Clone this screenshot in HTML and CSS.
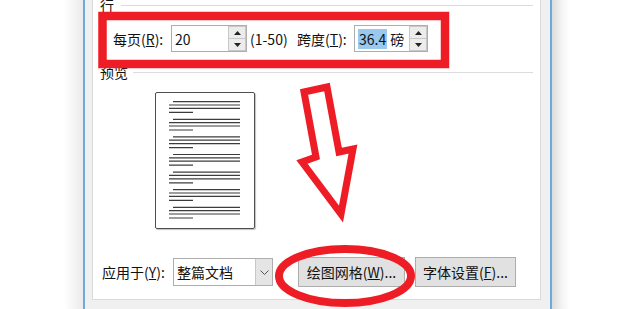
FILE: index.html
```html
<!DOCTYPE html>
<html lang="zh-CN">
<head>
<meta charset="utf-8">
<link rel="stylesheet" href="styles.css">
</head>
<body>
<div class="screen">
  <div class="shadow-left"></div>
  <div class="window">
    <div class="panel">
      <div class="group-head first"><span class="head-text">行</span><i class="rule"></i></div>
      <div class="row lines-row">
        <span class="label l1">每页(<u>R</u>):</span>
        <div class="spin s1">
          <span class="val">20</span>
          <div class="btns"><b class="sb"><svg width="7" height="4" viewBox="0 0 7 4"><path d="M0 4 L3.5 0 L7 4Z" fill="#222"/></svg></b><b class="sb"><svg width="7" height="4" viewBox="0 0 7 4"><path d="M0 0 L3.5 4 L7 0Z" fill="#222"/></svg></b></div>
        </div>
        <span class="range">(1-50)</span>
        <span class="label l2">跨度(<u>T</u>):</span>
        <div class="spin s2">
          <span class="val"><span class="sel">36.4</span> 磅</span>
          <div class="btns"><b class="sb"><svg width="7" height="4" viewBox="0 0 7 4"><path d="M0 4 L3.5 0 L7 4Z" fill="#222"/></svg></b><b class="sb"><svg width="7" height="4" viewBox="0 0 7 4"><path d="M0 0 L3.5 4 L7 0Z" fill="#222"/></svg></b></div>
        </div>
      </div>
      <div class="group-head second"><span class="head-text">预览</span><i class="rule"></i></div>
      <div class="preview">
        <div class="page">
          <svg width="100" height="137" viewBox="0 0 100 137">
            <g stroke="#3c3c3c" stroke-width="1.2">
              <g id="para">
                <line x1="18" y1="9.7" x2="85" y2="9.7"/>
                <line x1="14" y1="13" x2="85" y2="13"/>
                <line x1="14" y1="16.4" x2="85" y2="16.4"/>
                <line x1="14" y1="20.4" x2="38" y2="20.4"/>
              </g>
              <use href="#para" y="17.6"/>
              <use href="#para" y="35.2"/>
              <use href="#para" y="52.8"/>
              <use href="#para" y="70.4"/>
              <use href="#para" y="88"/>
              <use href="#para" y="105.6"/>
            </g>
          </svg>
        </div>
      </div>
      <div class="row bottom-row">
        <span class="label l3">应用于(<u>Y</u>):</span>
        <div class="combo">
          <span class="combo-text">整篇文档</span>
          <span class="drop"><svg width="9" height="5" viewBox="0 0 9 5"><path d="M0.5 0.5 L4.5 4.5 L8.5 0.5" fill="none" stroke="#555" stroke-width="1"/></svg></span>
        </div>
        <button class="btn b1">绘图网格(<u>W</u>)...</button>
        <button class="btn b2">字体设置(<u>F</u>)...</button>
      </div>
    </div>
  </div>
  <div class="shadow-right"></div>
</div>
<svg class="marks" width="620" height="309" viewBox="0 0 620 309">
  <g fill="none" stroke="#ee1c25">
    <rect x="102.5" y="16" width="342.5" height="48" stroke-width="8.5"/>
    <path d="M304 92 L327 87 L339 152 L353 149 L341 214 L302 162 L316 157 Z" stroke-width="7" stroke-linejoin="miter"/>
    <ellipse cx="345" cy="276" rx="66" ry="27" stroke-width="8"/>
  </g>
</svg>
</body>
</html>
```

FILE: styles.css
```css
html, body {
  margin: 0;
  padding: 0;
  background: #fff;
}
body {
  width: 620px;
  height: 309px;
  overflow: hidden;
  position: relative;
  font-family: "Noto Sans CJK SC", "Noto Sans", sans-serif;
  font-size: 14px;
  color: #111;
}
.screen {
  display: flex;
  height: 309px;
}
.shadow-left {
  width: 83px;
  background: linear-gradient(to right, #fff 0, #fff 64px, #ebebeb 83px);
}
.window {
  width: 449px;
  box-sizing: content-box;
  border-left: 2px solid #6ea9dd;
  border-right: 2px solid #6ea9dd;
  background: #f0f0f0;
  padding: 0 9px 9px 7px;
  display: flex;
  flex-direction: column;
}
.panel {
  flex: 1;
  background: #fff;
  border: 1px solid #dadada;
  border-top: 0;
  padding: 0 7px 12px 7px;
  display: flex;
  flex-direction: column;
}
.shadow-right {
  flex: 1;
  background: linear-gradient(to right, #dcdcdc 0, #f4f4f4 10px, #fff 18px);
}
.group-head {
  display: flex;
  align-items: center;
  height: 16px;
  line-height: 16px;
  gap: 7px;
}
.group-head.first { margin-top: -3px; }
.group-head.second { margin-top: 12px; gap: 5px; }
.rule {
  flex: 1;
  height: 1px;
  background: #dcdcdc;
}
.row {
  display: flex;
  align-items: center;
}
.lines-row {
  margin-top: 12px;
  height: 27px;
  padding-left: 13px;
}
.label { white-space: nowrap; }
.l1 { width: 58px; }
.l2 { width: 57px; }
.l3 { width: 71px; padding-left: 2px; }
.range { width: 47px; margin-left: 3px; }
.spin {
  box-sizing: border-box;
  height: 27px;
  border: 1px solid #adadad;
  background: #fff;
  display: flex;
  align-items: center;
  position: relative;
}
.s1 { width: 76px; }
.s2 { width: 74px; }
.val {
  flex: 1;
  padding-left: 3px;
  line-height: 18px;
}
.sel {
  background: #99c9ef;
  padding: 0 1px;
}
.btns {
  width: 18px;
  height: 25px;
  display: flex;
  flex-direction: column;
  margin-right: 0;
}
.sb {
  flex: 1;
  box-sizing: border-box;
  border: 1px solid #c8c8c8;
  background: #ececec;
  display: flex;
  align-items: center;
  justify-content: center;
}
.sb + .sb { border-top: 0; }
.preview {
  margin-top: 12px;
  padding-left: 55px;
}
.page {
  width: 100px;
  height: 137px;
  box-sizing: border-box;
  border: 1.5px solid #505050;
  border-radius: 2px;
  box-shadow: 1px 1px 1px rgba(0,0,0,0.25);
  position: relative;
  overflow: hidden;
}
.page svg {
  position: absolute;
  left: -1.5px;
  top: -1.5px;
}
.bottom-row {
  margin-top: 28px;
  height: 30px;
}
.combo {
  box-sizing: border-box;
  width: 100px;
  height: 28px;
  border: 1px solid #adadad;
  background: #fff;
  display: flex;
  align-items: stretch;
}
.combo-text {
  flex: 1;
  padding-left: 3px;
  line-height: 26px;
}
.drop {
  width: 16px;
  background: #e5e5e5;
  border-left: 1px solid #c8c8c8;
  display: flex;
  align-items: center;
  justify-content: center;
}
.btn {
  box-sizing: border-box;
  height: 30px;
  border: 1px solid #adadad;
  background: #e1e1e1;
  font-family: inherit;
  font-size: 14px;
  color: #111;
  padding: 0;
  white-space: nowrap;
}
.b1 { width: 107px; margin-left: 25px; }
.b2 { width: 101px; margin-left: 10px; }
.marks {
  position: absolute;
  left: 0;
  top: 0;
  pointer-events: none;
}
```
